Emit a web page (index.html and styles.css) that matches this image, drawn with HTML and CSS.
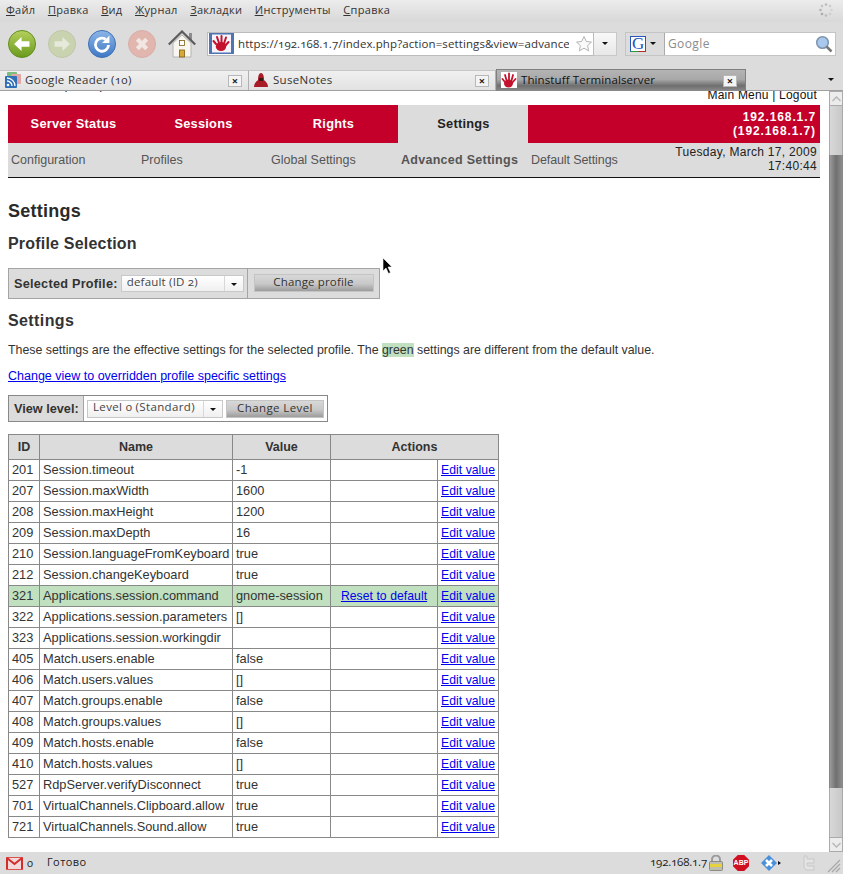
FILE: index.html
```html
<!DOCTYPE html>
<html lang="ru">
<head>
<meta charset="utf-8">
<title>Thinstuff Terminalserver</title>
<link rel="stylesheet" href="styles.css">
</head>
<body>
<div class="browser">
  <div class="menubar">
    <span class="menu"><u>Ф</u>айл</span><span class="menu"><u>П</u>равка</span><span class="menu"><u>В</u>ид</span><span class="menu"><u>Ж</u>урнал</span><span class="menu"><u>З</u>акладки</span><span class="menu"><u>И</u>нструменты</span><span class="menu"><u>С</u>правка</span>
    <svg class="spinner" width="14" height="14" viewBox="0 0 14 14"><g fill="#bbb"><circle cx="7" cy="1.5" r="1.3"/><circle cx="11" cy="3" r="1.3" fill="#ccc"/><circle cx="12.5" cy="7" r="1.3" fill="#d4d4d4"/><circle cx="11" cy="11" r="1.3" fill="#ccc"/><circle cx="7" cy="12.5" r="1.3"/><circle cx="3" cy="11" r="1.3" fill="#aaa"/><circle cx="1.5" cy="7" r="1.3" fill="#b4b4b4"/><circle cx="3" cy="3" r="1.3" fill="#c4c4c4"/></g></svg>
  </div>
  <div class="toolbar">
    <svg class="navbtn" width="28" height="28" viewBox="0 0 30 30"><defs><linearGradient id="gg" x1="0" y1="0" x2="0" y2="1"><stop offset="0" stop-color="#b4d05c"/><stop offset="1" stop-color="#6a9a1e"/></linearGradient></defs><circle cx="15" cy="15" r="14.500" fill="url(#gg)" stroke="#5f8a1c"/><path d="M6.500 15l8-7.500v4.500h8.500v6h-8.500v4.500z" fill="#fff"/></svg>
    <svg class="navbtn" width="28" height="28" viewBox="0 0 30 30"><circle cx="15" cy="15" r="14.500" fill="#c9d3b0" stroke="#bcc6a4"/><path d="M23.500 15l-8-7.500v4.500h-8.500v6h8.500v4.500z" fill="#e6eadb"/></svg>
    <svg class="navbtn" width="28" height="28" viewBox="0 0 30 30"><defs><linearGradient id="gb" x1="0" y1="0" x2="0" y2="1"><stop offset="0" stop-color="#8db6e8"/><stop offset="1" stop-color="#3f78c4"/></linearGradient></defs><circle cx="15" cy="15" r="14.500" fill="url(#gb)" stroke="#3a6db4"/><path d="M22 16a7 7 0 1 1-3-6" fill="none" stroke="#fff" stroke-width="3"/><path d="M23 6v8h-8z" fill="#fff"/></svg>
    <svg class="navbtn" width="28" height="28" viewBox="0 0 30 30"><circle cx="15" cy="15" r="14.500" fill="#e0b6ae" stroke="#d8aca4"/><path d="M10 10l10 10M20 10l-10 10" stroke="#f2e6e2" stroke-width="4.500"/></svg>
    <svg class="home" width="28" height="28" viewBox="0 0 28 28"><path d="M5 13v14h18V13L14 5z" fill="#f8f6ee" stroke="#b4b4b4"/><rect x="21" y="3" width="3" height="7" fill="#8c8c8c"/><path d="M.8 14.500L14 1.500l13.200 13" fill="none" stroke="#5c5c5c" stroke-width="2.200"/><rect x="11.500" y="20" width="5" height="7" fill="#d9a83a" stroke="#7d5e12" stroke-width=".8"/><rect x="11.500" y="10.500" width="5" height="5" fill="#fff" stroke="#7d5e12" stroke-width=".8"/></svg>
    <div class="urlbar">
      <span class="favicon"><svg width="25" height="21" viewBox="0 0 25 21"><rect width="25" height="21" fill="#4f74b4"/><rect x="3" y="1.500" width="19" height="18" fill="#f4f4fa"/><g fill="none" stroke="#c4122d" stroke-width="2" stroke-linecap="round"><path d="M7 11L4.500 8M10 10l-2-6M12.500 10V3M15 10.500l2-6M16 13l3.500-4"/></g><ellipse cx="12" cy="13.500" rx="5.200" ry="4.500" fill="#c4122d"/></svg></span>
      <span class="urltext">https://192.168.1.7/index.php?action=settings&amp;view=advanced</span>
      <svg class="star" width="18" height="18" viewBox="0 0 18 18"><path d="M9 1.500l2.300 5 5.200.6-3.900 3.500 1.100 5.300L9 13.200l-4.700 2.700 1.100-5.300L1.500 7.100l5.200-.6z" fill="#fafafa" stroke="#b4b4b4"/></svg>
    </div>
    <span class="urldrop"><i class="caret"></i></span>
    <div class="searchbar">
      <span class="engine"><svg width="16" height="16" viewBox="0 0 16 16"><rect x=".5" y=".5" width="15" height="15" fill="#fff" stroke="#2a56b8"/><path d="M15.500 .5v15H8" fill="none" stroke="#b82a2a"/><path d="M.5 15.500h8" fill="none" stroke="#2a9a3a"/></svg><b class="g">G</b><i class="caret"></i></span>
      <span class="searchtext">Google</span>
      <svg class="glass" width="18" height="18" viewBox="0 0 18 18"><circle cx="7.500" cy="7.500" r="5.800" fill="#a8c8ee" stroke="#7e94ac" stroke-width="1.500"/><path d="M11.500 11.500l5 5" stroke="#777" stroke-width="2.500"/></svg>
    </div>
  </div>
  <div class="tabbar">
    <div class="tab tab-first">
      <svg class="tabicon" width="16" height="16" viewBox="0 0 16 16"><rect x="2" y="0" width="10" height="10" rx="1" fill="#7cbc7c"/><rect x="6" y="2" width="10" height="10" rx="1" fill="#e2a6a6"/><rect x="0" y="4" width="12" height="12" rx="1" fill="#2f6fb8"/><circle cx="3" cy="13" r="1.300" fill="#fff"/><path d="M2 9a5 5 0 0 1 5 5M2 6a8 8 0 0 1 8 8" fill="none" stroke="#fff" stroke-width="1.300"/></svg>
      <span class="tabtitle">Google Reader (10)</span><span class="tabclose">×</span>
    </div>
    <div class="tab tab-second">
      <svg class="tabicon" width="16" height="16" viewBox="0 0 16 16"><path d="M1 15c0-4 3-6 4-7C5 4 6 1 8 1s3 3 3 7c1 1 4 3 4 7z" fill="#a81c28"/><path d="M6 6h4v3H6z" fill="#3a1c14"/></svg>
      <span class="tabtitle">SuseNotes</span><span class="tabclose">×</span>
    </div>
    <div class="tab tab-active">
      <svg class="tabicon" width="16" height="16" viewBox="0 0 16 16"><rect width="16" height="16" fill="#fff"/><g fill="none" stroke="#c4122d" stroke-width="1.800" stroke-linecap="round"><path d="M3.500 9.500L1.500 7M5.500 8L4 3M8 8V1.500M10.500 8.500L12 3M11 11l3.500-4"/></g><ellipse cx="7.500" cy="11.500" rx="4.500" ry="4" fill="#c4122d"/></svg>
      <span class="tabtitle">Thinstuff Terminalserver</span><span class="tabclose">×</span>
    </div>
    <i class="caret tabs-caret"></i>
  </div>
  <div class="viewport">
    <main class="doc">
      <div class="clipped-user">(admin)</div>
      <div class="toplinks">Main Menu | Logout</div>
      <nav class="mainnav">
        <span class="navitem">Server Status</span><span class="navitem">Sessions</span><span class="navitem">Rights</span><span class="navitem navitem-on">Settings</span>
        <span class="navhost">192.168.1.7<br>(192.168.1.7)</span>
      </nav>
      <nav class="subnav">
        <span class="subitem">Configuration</span><span class="subitem">Profiles</span><span class="subitem">Global Settings</span><span class="subitem subitem-on">Advanced Settings</span><span class="subitem subitem-last">Default Settings</span>
        <span class="subdate">Tuesday, March 17, 2009<br>17:40:44</span>
      </nav>
      <h1 class="title">Settings</h1>
      <h2 class="subtitle">Profile Selection</h2>
      <div class="profilebox">
        <div class="pb-left"><b class="pb-label">Selected Profile:</b>
          <span class="select select-profile"><span class="select-text">default (ID 2)</span><span class="select-btn"><i class="caret"></i></span></span>
        </div>
        <div class="pb-right"><span class="button button-profile">Change profile</span></div>
      </div>
      <h3 class="section">Settings</h3>
      <p class="intro">These settings are the effective settings for the selected profile. The <span class="green">green</span> settings are different from the default value.</p>
      <p class="switch"><a class="link" href="#">Change view to overridden profile specific settings</a></p>
      <div class="levelbox">
        <b class="lb-label">View level:</b>
        <div class="lb-right">
          <span class="select select-level"><span class="select-text">Level 0 (Standard)</span><span class="select-btn"><i class="caret"></i></span></span>
          <span class="button button-level">Change Level</span>
        </div>
      </div>
      <table class="settings">
        <colgroup><col class="c-id"><col class="c-name"><col class="c-value"><col class="c-reset"><col class="c-edit"></colgroup>
        <thead><tr><th>ID</th><th>Name</th><th>Value</th><th colspan="2">Actions</th></tr></thead>
        <tbody>
          <tr><td>201</td><td>Session.timeout</td><td>-1</td><td></td><td><a class="link" href="#">Edit value</a></td></tr>
          <tr><td>207</td><td>Session.maxWidth</td><td>1600</td><td></td><td><a class="link" href="#">Edit value</a></td></tr>
          <tr><td>208</td><td>Session.maxHeight</td><td>1200</td><td></td><td><a class="link" href="#">Edit value</a></td></tr>
          <tr><td>209</td><td>Session.maxDepth</td><td>16</td><td></td><td><a class="link" href="#">Edit value</a></td></tr>
          <tr><td>210</td><td>Session.languageFromKeyboard</td><td>true</td><td></td><td><a class="link" href="#">Edit value</a></td></tr>
          <tr><td>212</td><td>Session.changeKeyboard</td><td>true</td><td></td><td><a class="link" href="#">Edit value</a></td></tr>
          <tr class="changed"><td>321</td><td>Applications.session.command</td><td>gnome-session</td><td class="reset"><a class="link" href="#">Reset to default</a></td><td><a class="link" href="#">Edit value</a></td></tr>
          <tr><td>322</td><td>Applications.session.parameters</td><td>[]</td><td></td><td><a class="link" href="#">Edit value</a></td></tr>
          <tr><td>323</td><td>Applications.session.workingdir</td><td></td><td></td><td><a class="link" href="#">Edit value</a></td></tr>
          <tr><td>405</td><td>Match.users.enable</td><td>false</td><td></td><td><a class="link" href="#">Edit value</a></td></tr>
          <tr><td>406</td><td>Match.users.values</td><td>[]</td><td></td><td><a class="link" href="#">Edit value</a></td></tr>
          <tr><td>407</td><td>Match.groups.enable</td><td>false</td><td></td><td><a class="link" href="#">Edit value</a></td></tr>
          <tr><td>408</td><td>Match.groups.values</td><td>[]</td><td></td><td><a class="link" href="#">Edit value</a></td></tr>
          <tr><td>409</td><td>Match.hosts.enable</td><td>false</td><td></td><td><a class="link" href="#">Edit value</a></td></tr>
          <tr><td>410</td><td>Match.hosts.values</td><td>[]</td><td></td><td><a class="link" href="#">Edit value</a></td></tr>
          <tr><td>527</td><td>RdpServer.verifyDisconnect</td><td>true</td><td></td><td><a class="link" href="#">Edit value</a></td></tr>
          <tr><td>701</td><td>VirtualChannels.Clipboard.allow</td><td>true</td><td></td><td><a class="link" href="#">Edit value</a></td></tr>
          <tr><td>721</td><td>VirtualChannels.Sound.allow</td><td>true</td><td></td><td><a class="link" href="#">Edit value</a></td></tr>
        </tbody>
      </table>
      <svg class="cursor" width="12" height="18" viewBox="0 0 12 18"><path d="M1 1v13l3-3 2.500 5.500 2-1L6 10h4z" fill="#000" stroke="#fff" stroke-width=".6"/></svg>
    </main>
    <div class="scrollbar">
      <span class="sb-btn"><svg width="9" height="6" viewBox="0 0 9 6"><path d="M.5 5l4-4 4 4" fill="none" stroke="#b8b8b8" stroke-width="1.500"/></svg></span>
      <span class="sb-cap"></span>
      <span class="sb-thumb"></span>
      <span class="sb-cap sb-cap-low"></span>
      <span class="sb-btn"><svg width="9" height="6" viewBox="0 0 9 6"><path d="M.5 1l4 4 4-4" fill="none" stroke="#b8b8b8" stroke-width="1.500"/></svg></span>
    </div>
  </div>
  <div class="statusbar">
    <svg class="gmail" width="17" height="13" viewBox="0 0 17 13"><rect x=".5" y=".5" width="16" height="12" fill="#f4d9d9" stroke="#d9534f"/><path d="M1 1l7.500 6L16 1M1 1v11M16 1v11" fill="none" stroke="#d42c2c" stroke-width="2"/></svg>
    <span class="mailcount">0</span>
    <span class="status">Готово</span>
    <span class="statushost">192.168.1.7</span>
    <svg class="lock" width="14" height="16" viewBox="0 0 14 16"><path d="M3 7V4.500a4 4 0 0 1 8 0V7" fill="none" stroke="#9a9a9a" stroke-width="2"/><rect x="0.500" y="6.500" width="13" height="9" rx="1" fill="#bdbdb0" stroke="#8a8a80"/><rect x="1" y="9" width="12" height="3" fill="#e6d23c"/></svg>
    <span class="abp">ABP</span>
    <svg class="xmark" width="21" height="16" viewBox="0 0 21 16"><path d="M8 0l8 8-8 8-8-8z" fill="#4a90d8"/><path d="M5 5l6 6M11 5l-6 6" stroke="#fff" stroke-width="2.500"/><path d="M17 6l3 2-3 2z" fill="#111"/></svg>
    <svg class="bird" width="14" height="16" viewBox="0 0 14 16"><path d="M2 1h3v3h7v4H5v2c0 1 1 1 2 1h5v4H6c-3 0-4-2-4-4z" fill="#e4e4e4" stroke="#c8c8c8"/></svg>
    <svg class="grip" width="14" height="14" viewBox="0 0 14 14"><path d="M1 13L13 1M5 13l8-8M9 13l4-4" stroke="#a8a8a8" stroke-width="1.200"/></svg>
  </div>
</div>
</body>
</html>
```
FILE: styles.css
```css
* { box-sizing: border-box; }
html, body { margin: 0; padding: 0; height: 100%; overflow: hidden; }
body { font-family: "Liberation Sans", Arial, sans-serif; font-size: 12px; color: #333; background: #fff; }
.browser { display: flex; flex-direction: column; height: 874px; width: 843px; }

.menubar, .toolbar, .tabbar, .statusbar { font-family: "Open Sans", "DejaVu Sans", sans-serif; font-variant-numeric: oldstyle-nums; }
.menubar { height: 22px; flex: none; display: flex; align-items: center; padding: 0 0 3px 6px; gap: 12.500px; background: linear-gradient(#ececec, #d8d8d8); color: #333; font-size: 11px; letter-spacing: .3px; }
.spinner { margin-left: auto; margin-right: 10px; }

.toolbar { height: 48px; flex: none; display: flex; align-items: center; background: #dcdcdc; padding: 0 0 5px 8px; }
.navbtn { margin-right: 12px; flex: none; }
.home { flex: none; margin-right: 11px; }
.urlbar { width: 387px; height: 24px; background: #fff; border: 1px solid #bcbcbc; display: flex; align-items: center; overflow: hidden; }
.favicon { width: 27px; height: 22px; flex: none; display: flex; align-items: center; justify-content: center; margin-right: 3px; }
.urltext { font-size: 11.500px; color: #333; white-space: nowrap; width: 331px; overflow: hidden; letter-spacing: .1px; flex: none; }
.star { flex: none; margin-left: 6px; }
.urldrop { width: 23px; height: 24px; background: linear-gradient(#f8f8f8, #e8e8e8); border: 1px solid #c8c8c8; border-left: 0; display: flex; align-items: center; justify-content: center; flex: none; margin-right: 8px; }
.caret { display: inline-block; width: 0; height: 0; border-left: 3.500px solid transparent; border-right: 3.500px solid transparent; border-top: 3.500px solid #111; }
.searchbar { width: 211px; height: 24px; background: #fff; border: 1px solid #c4c4c4; display: flex; align-items: center; flex: none; }
.engine { width: 39px; height: 22px; background: #dcdcdc; border-right: 1px solid #aaa; display: flex; align-items: center; padding-left: 4px; gap: 4px; position: relative; flex: none; }
.g { position: absolute; left: 6px; top: 1px; color: #2352b8; font-family: "Liberation Serif", serif; font-weight: 400; font-size: 17px; line-height: 20px; }
.searchtext { color: #8c8c8c; font-size: 12px; margin-left: 3px; letter-spacing: .4px; flex: 1; }
.glass { margin-right: 2px; flex: none; }

.tabbar { height: 21px; flex: none; display: flex; align-items: flex-end; background: #dcdcdc; border-bottom: 1px solid #a0a0a0; font-size: 11.500px; color: #333; }
.tab { height: 20px; display: flex; align-items: center; flex: none; background: linear-gradient(#f0f0f0, #e2e2e2); border-top: 1px solid #c6c6c6; border-right: 1px solid #b0b0b0; padding: 0 0 2px 5px; letter-spacing: .3px; }
.tab .tabtitle { padding-bottom: 1px; }
.tab-first { width: 249px; }
.tab-second { width: 247px; padding-left: 4px; }
.tab-active { width: 250px; height: 22px; margin-bottom: -1px; background: linear-gradient(#b4b4b4 0%, #a8a8a8 45%, #6e6e6e 75%, #8c8c8c 100%); border: 1px solid #808080; border-bottom: 0; padding: 0 0 2px 4px; color: #111; letter-spacing: .1px; }
.tabicon { flex: none; margin-right: 4px; }
.tabtitle { flex: 1; white-space: nowrap; }
.tabclose { width: 14px; height: 12px; flex: none; margin: 2px 6px 0 0; border: 1px solid #b8b8b8; background: #f4f4f4; font-size: 11px; line-height: 9px; text-align: center; color: #222; font-weight: 700; letter-spacing: 0; }
.tab-active .tabclose { margin-right: 8px; }
.tabs-caret { margin: 0 0 9px 82px; }

.viewport { flex: 1; min-height: 0; display: flex; overflow: hidden; background: #fff; }
.doc { flex: 1; min-width: 0; overflow: hidden; padding: 0 8px; position: relative; }
.clipped-user { height: 0; margin-left: 55px; font-size: 12px; line-height: 14px; transform: translateY(-13px); color: #000; }
.toplinks { text-align: right; padding-right: 3px; height: 14px; line-height: 8px; color: #111; font-size: 12px; letter-spacing: .2px; }
.mainnav { display: flex; height: 38px; background: #c4002a; color: #fff; font-weight: 700; font-size: 12.800px; letter-spacing: .25px; }
.navitem { width: 130px; display: flex; align-items: center; justify-content: center; padding: 0 0 2px 1px; }
.navitem-on { background: #dcdcdc; color: #222; }
.navhost { flex: 1; text-align: right; padding: 5px 4px 0 0; line-height: 14px; font-size: 12px; letter-spacing: .9px; }
.subnav { display: flex; height: 35px; background: #dcdcdc; border-bottom: 1px solid #111; color: #555; font-size: 12.500px; align-items: center; padding-bottom: 1px; }
.subitem { width: 130px; padding-left: 3px; white-space: nowrap; }
.subitem-on { font-weight: 700; letter-spacing: .27px; }
.subitem-last { letter-spacing: -.1px; }
.subdate { flex: 1; text-align: right; color: #222; line-height: 14px; padding-right: 3px; font-size: 12px; letter-spacing: .3px; margin-top: -1px; }

.title { margin: 23px 0 0; font-size: 18px; line-height: 21px; font-weight: 700; color: #2a2a2a; letter-spacing: .25px; }
.subtitle { margin: 12px 0 0; font-size: 16px; line-height: 20px; font-weight: 700; color: #333; letter-spacing: .2px; }
.profilebox { display: flex; width: 372px; height: 31px; margin-top: 14px; background: #dcdcdc; border: 1px solid #a4a4a4; }
.pb-left { width: 239px; flex: none; border-right: 1px solid #a4a4a4; display: flex; align-items: center; padding-left: 5px; gap: 3px; }
.pb-label, .lb-label { font-weight: 700; color: #333; font-size: 12.700px; white-space: nowrap; }
.pb-label { letter-spacing: .25px; }
.pb-right { flex: 1; display: flex; align-items: center; padding-left: 5.500px; }
.select { display: flex; height: 17px; background: linear-gradient(#fff, #f0f0f0); border: 1px solid #c8c8c8; font-family: "Open Sans", sans-serif; font-size: 11.500px; font-variant-numeric: oldstyle-nums; color: #444; letter-spacing: .2px; line-height: 12px; }
.select-text { flex: 1; padding-left: 5px; white-space: nowrap; overflow: hidden; }
.select-btn { width: 19px; border-left: 1px solid #d8d8d8; display: flex; align-items: center; justify-content: center; flex: none; padding-top: 1px; }
.select-profile { width: 123px; }
.select-level { width: 136px; height: 18px; letter-spacing: .35px; }
.button { display: flex; align-items: center; justify-content: center; height: 18px; padding-bottom: 3px; background: linear-gradient(#d8d8d8, #c8c8c8 55%, #9c9c9c); border: 1px solid #c4c4c4; font-family: "Open Sans", sans-serif; font-size: 11.500px; color: #333; letter-spacing: .15px; white-space: nowrap; }
.button-profile { width: 120px; margin-top: -2px; }
.button-level { width: 98px; letter-spacing: .4px; }

.section { margin: 12px 0 0; font-size: 16px; line-height: 20px; font-weight: 700; color: #333; letter-spacing: .4px; }
.intro { margin: 11px 0 0; line-height: 16px; font-size: 12.360px; }
.green { background: #c0e0c0; }
.switch { margin: 10px 0 0; line-height: 16px; font-size: 12.500px; }
.link { color: #00e; text-decoration: underline; }
.levelbox { display: flex; width: 320px; height: 27px; margin-top: 11px; border: 1px solid #888; }
.lb-label { width: 75px; flex: none; background: #dcdcdc; border-right: 1px solid #a4a4a4; display: flex; align-items: center; padding-left: 5px; }
.lb-right { flex: 1; display: flex; align-items: center; padding-left: 3px; gap: 3px; }

.settings { border-collapse: collapse; table-layout: fixed; width: 490px; margin-top: 12px; font-size: 12.800px; }
.c-id { width: 31px; } .c-name { width: 193px; } .c-value { width: 98px; } .c-reset { width: 107px; } .c-edit { width: 61px; }
.settings th, .settings td { border: 1px solid #888; padding: 0 3px; white-space: nowrap; overflow: hidden; }
.settings th { background: #dcdcdc; height: 25px; font-weight: 700; color: #333; font-size: 12.500px; }
.settings td { height: 21px; padding-bottom: 2px; }
.settings .link { font-size: 12.200px; letter-spacing: .05px; }
.changed td { background: #c0e0c0; }
.reset { text-align: center; }
.cursor { position: absolute; left: 382px; top: 166px; }

.scrollbar { width: 15px; flex: none; background: #d4d4d4; display: flex; flex-direction: column; border-left: 1px solid #fff; }
.sb-btn { height: 15px; flex: none; background: #ececec; border: 1px solid #aaa; display: flex; align-items: center; justify-content: center; }
.sb-cap { height: 49px; flex: none; background: linear-gradient(90deg, #d8d8d8, #c8c8c8); border-left: 1px solid #aaa; border-right: 1px solid #aaa; }
.sb-thumb { flex: 1; background: linear-gradient(90deg, #9a9a9a, #707070 50%, #8c8c8c); border-left: 1px solid #888; border-right: 1px solid #888; }

.statusbar { height: 22px; flex: none; background: #dcdcdc; display: flex; align-items: center; font-size: 11px; color: #222; padding-left: 6px; letter-spacing: .4px; }
.gmail { flex: none; }
.mailcount { flex: none; margin-left: 4px; width: 20px; padding-bottom: 2px; }
.status { flex: none; width: 603px; padding-bottom: 3px; }
.statushost { flex: none; white-space: nowrap; letter-spacing: -.2px; padding-bottom: 3px; font-size: 11.500px; width: 52px; }
.lock { flex: none; margin-left: 7px; }
.abp { flex: none; width: 16px; height: 16px; margin-left: 10px; background: #d01020; color: #fff; clip-path: polygon(30% 0, 70% 0, 100% 30%, 100% 70%, 70% 100%, 30% 100%, 0 70%, 0 30%); font-family: "Liberation Sans", sans-serif; font-size: 7px; font-weight: 700; line-height: 16px; text-align: center; letter-spacing: 0; }
.xmark { flex: none; margin-left: 12px; }
.bird { flex: none; margin-left: 20px; }
.grip { flex: none; margin-left: 11px; margin-top: 6px; }
```
